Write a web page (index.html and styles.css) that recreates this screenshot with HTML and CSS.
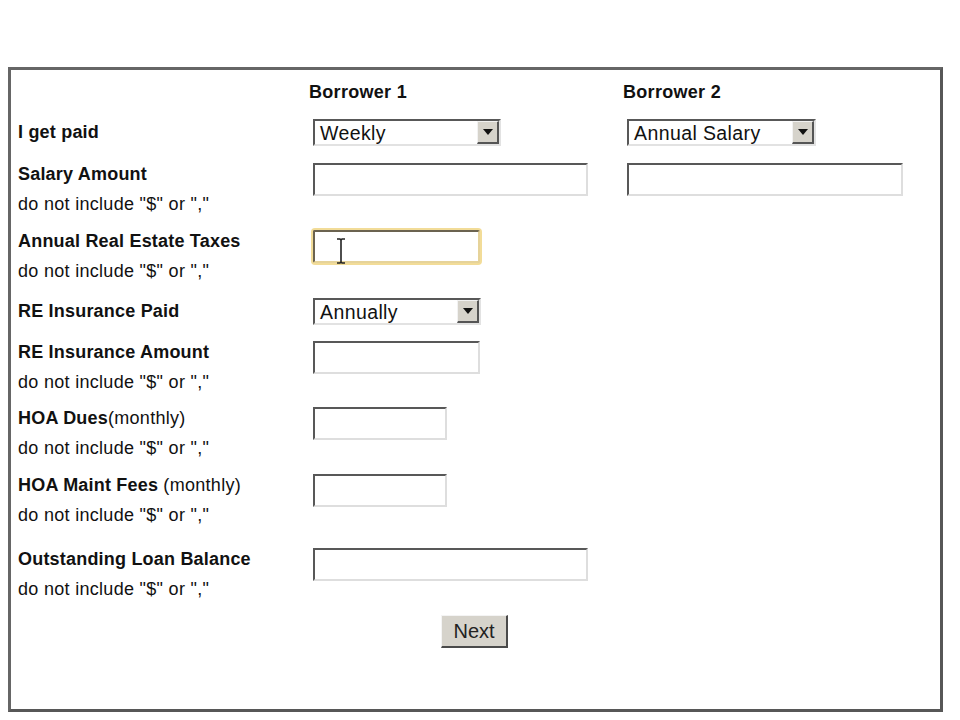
FILE: index.html
```html
<!DOCTYPE html>
<html lang="en">
<head>
<meta charset="utf-8">
<title>Borrower Income</title>
<link rel="stylesheet" href="styles.css">
</head>
<body>
<form class="panel">
  <div class="row row-head">
    <div></div>
    <div class="col-head">Borrower 1</div>
    <div class="col-head">Borrower 2</div>
  </div>

  <div class="row mb17">
    <div class="label"><div class="title tall">I get paid</div></div>
    <div class="cell">
      <div class="select w188"><span class="select-value">Weekly</span><span class="select-btn"><span class="tri"></span></span></div>
    </div>
    <div class="cell">
      <div class="select w189"><span class="select-value">Annual Salary</span><span class="select-btn"><span class="tri"></span></span></div>
    </div>
  </div>

  <div class="row">
    <div class="label"><div class="title">Salary Amount</div><div class="hint">do not include "$" or ","</div></div>
    <div class="cell"><input class="field w275" type="text"></div>
    <div class="cell"><input class="field w276" type="text"></div>
  </div>

  <div class="row mb16">
    <div class="label"><div class="title">Annual Real Estate Taxes</div><div class="hint">do not include "$" or ","</div></div>
    <div class="cell">
      <span class="focus-wrap">
        <input class="field w167 focused" type="text">
        <svg class="ibeam" width="12" height="28" viewBox="0 0 12 28" aria-hidden="true"><path d="M2 2h3l1 1 1-1h3M6 3v22M2 26h3l1-1 1 1h3" fill="none" stroke="#222" stroke-width="1.6"/></svg>
      </span>
    </div>
    <div></div>
  </div>

  <div class="row mb16">
    <div class="label"><div class="title tall">RE Insurance Paid</div></div>
    <div class="cell">
      <div class="select w168"><span class="select-value">Annually</span><span class="select-btn"><span class="tri"></span></span></div>
    </div>
    <div></div>
  </div>

  <div class="row mb14">
    <div class="label"><div class="title">RE Insurance Amount</div><div class="hint">do not include "$" or ","</div></div>
    <div class="cell"><input class="field w167" type="text"></div>
    <div></div>
  </div>

  <div class="row">
    <div class="label"><div class="title">HOA Dues<span class="normal">(monthly)</span></div><div class="hint">do not include "$" or ","</div></div>
    <div class="cell"><input class="field w134" type="text"></div>
    <div></div>
  </div>

  <div class="row mb22">
    <div class="label"><div class="title">HOA Maint Fees <span class="normal">(monthly)</span></div><div class="hint">do not include "$" or ","</div></div>
    <div class="cell"><input class="field w134" type="text"></div>
    <div></div>
  </div>

  <div class="row">
    <div class="label"><div class="title">Outstanding Loan Balance</div><div class="hint">do not include "$" or ","</div></div>
    <div class="cell"><input class="field w275" type="text"></div>
    <div></div>
  </div>

  <div class="actions">
    <button type="button" class="btn">Next</button>
  </div>
</form>
</body>
</html>
```

FILE: styles.css
```css
html, body {
  margin: 0;
  padding: 0;
  background: #ffffff;
}

body {
  font-family: "Liberation Sans", Arial, sans-serif;
  font-size: 18px;
  letter-spacing: 0.3px;
  color: #111111;
}

.panel {
  box-sizing: border-box;
  width: 935px;
  height: 645px;
  margin: 67px 0 0 8px;
  border: 3px solid #575757;
  border-top-color: #666666;
  border-left-color: #666666;
  padding: 11px 0 0 7px;
  display: flex;
  flex-direction: column;
}

.row {
  display: grid;
  grid-template-columns: 291px 314px 1fr;
  align-items: start;
  margin-bottom: 15px;
}

.row-head { margin-bottom: 16px; }
.mb14 { margin-bottom: 14px; }
.mb16 { margin-bottom: 16px; }
.mb17 { margin-bottom: 17px; }
.mb22 { margin-bottom: 22px; }

.col-head {
  font-weight: bold;
  line-height: 22px;
}

.label .title {
  font-weight: bold;
  line-height: 22px;
  letter-spacing: 0.2px;
  white-space: nowrap;
}

.label .title.tall {
  line-height: 27px;
}

.label .normal {
  font-weight: normal;
  letter-spacing: 0.3px;
}

.label .hint {
  line-height: 22px;
  margin-top: 8px;
  white-space: nowrap;
}

.cell {
  padding-left: 4px;
}

.field {
  box-sizing: border-box;
  display: block;
  height: 33px;
  margin: 0;
  padding: 0 4px;
  background: #ffffff;
  font-family: "Liberation Sans", Arial, sans-serif;
  font-size: 18px;
  border-style: solid;
  border-width: 2px;
  border-color: #585858 #dedede #dedede #585858;
  outline: none;
}

.w134 { width: 134px; }
.w167 { width: 167px; }
.w168 { width: 168px; }
.w188 { width: 188px; }
.w189 { width: 189px; }
.w275 { width: 275px; }
.w276 { width: 276px; }

.focus-wrap {
  position: relative;
  display: inline-block;
}

.field.focused {
  border-color: #6b6350 #e6d39a #e6d39a #6b6350;
  box-shadow: 0 0 0 2px #f2dc98;
  border-radius: 2px;
}

.ibeam {
  position: absolute;
  left: 22px;
  top: 7px;
}

.select {
  box-sizing: border-box;
  height: 27px;
  display: flex;
  align-items: stretch;
  background: #ffffff;
  border-style: solid;
  border-width: 2px;
  border-color: #585858 #e2e2e2 #e2e2e2 #585858;
}

.select-value {
  flex: 1;
  padding-left: 5px;
  font-size: 19.5px;
  letter-spacing: 0.4px;
  line-height: 24px;
  white-space: nowrap;
  overflow: hidden;
}

.select-btn {
  box-sizing: border-box;
  width: 22px;
  background: #d6d3cb;
  border-style: solid;
  border-width: 1px 2px 2px 1px;
  border-color: #f2f2f2 #555555 #555555 #f2f2f2;
  display: flex;
  align-items: center;
  justify-content: center;
}

.tri {
  width: 0;
  height: 0;
  border-left: 5px solid transparent;
  border-right: 5px solid transparent;
  border-top: 6px solid #111111;
}

.actions {
  display: flex;
  justify-content: center;
  padding-right: 9px;
}

.btn {
  box-sizing: border-box;
  width: 67px;
  height: 33px;
  padding: 0;
  background: #d6d3cb;
  font-family: "Liberation Sans", Arial, sans-serif;
  font-size: 20px;
  color: #222222;
  border-style: solid;
  border-width: 1px 2px 2px 1px;
  border-color: #f4f4f4 #4a4a4a #4a4a4a #f4f4f4;
}
```
